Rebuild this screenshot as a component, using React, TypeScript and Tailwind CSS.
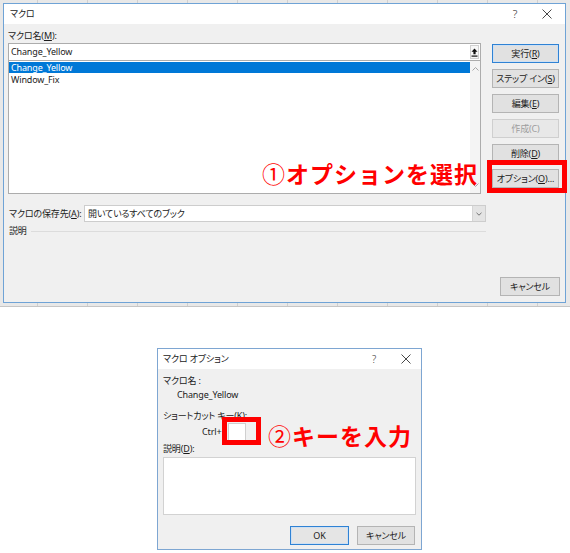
import type { ReactNode } from "react";

const ui = "font-['Noto_Sans','Noto_Sans_CJK_JP',sans-serif] [font-feature-settings:'palt'] text-[9px] tracking-[-0.15px] text-[#1b1b1b]";
const mark = "font-['Noto_Sans_CJK_JP',sans-serif] [font-feature-settings:normal] text-[23px] font-bold leading-none tracking-[1px] text-[#ff0000]";

function Btn({
  children,
  className = "",
  tone = "normal",
}: {
  children: ReactNode;
  className?: string;
  tone?: "normal" | "default" | "disabled";
}) {
  const look =
    tone === "default"
      ? "border-[#2f82d4] bg-[#e1e1e1] text-[#1b1b1b] shadow-[inset_0_0_0_1px_#cfe0f2]"
      : tone === "disabled"
        ? "border-[#cfcfcf] bg-[#e8e8e8] text-[#9d9d9d]"
        : "border-[#b4b4b4] bg-[#e1e1e1] text-[#1b1b1b]";
  return (
    <div className={`flex h-[19px] items-center justify-center border leading-none ${look} ${className}`}>
      {children}
    </div>
  );
}

function Key({ k }: { k: string }) {
  return <span className="underline underline-offset-[1px]">{k}</span>;
}

function Close() {
  return (
    <svg width="10" height="10" viewBox="0 0 10 10" className="block">
      <path d="M0.5 0.5 L9.5 9.5 M9.5 0.5 L0.5 9.5" stroke="#333" strokeWidth="0.9" fill="none" />
    </svg>
  );
}

function Chevron({ up = false }: { up?: boolean }) {
  return (
    <svg width="7" height="4" viewBox="0 0 7 4" className="block">
      <path d={up ? "M0.5 3.5 L3.5 0.5 L6.5 3.5" : "M0.5 0.5 L3.5 3.5 L6.5 0.5"} stroke="#a6a6a6" strokeWidth="1" fill="none" />
    </svg>
  );
}

function MacroDialog() {
  return (
    <div className="flex h-[300px] w-[563px] flex-col border border-[#6fa3d6]">
      <div className="flex h-[20px] items-center bg-white pl-[6px] pr-[8px]">
        <span>マクロ</span>
        <span className="ml-auto w-[20px] text-center text-[11px] font-light text-[#333]">?</span>
        <span className="ml-[12px] flex w-[20px] justify-center">
          <Close />
        </span>
      </div>
      <div className="flex flex-1 flex-col bg-[#f0f0f0] pl-[4px]">
        <div className="flex">
          <div className="w-[478px]">
            <div className="flex h-[19px] items-center pt-[4px]">
              マクロ名(<Key k="M" />):
            </div>
            <div className="flex h-[18px] w-[473px] items-center border border-[#acacac] bg-white">
              <span className="pl-[2px]">Change_Yellow</span>
              <span className="ml-auto mr-[1px] flex h-[14px] w-[9px] items-center justify-center border border-[#d0d0d0] bg-[#f7f7f7]">
                <svg width="7" height="9" viewBox="0 0 7 9" className="block">
                  <path d="M3.5 0.5 L6.5 3.8 L4.6 3.8 L4.6 6.2 L2.4 6.2 L2.4 3.8 L0.5 3.8 Z" fill="#111" />
                  <rect x="0.5" y="7.5" width="6" height="1.2" fill="#111" />
                </svg>
              </span>
            </div>
            <div className="flex h-[133px] w-[473px] border border-t-0 border-[#acacac] bg-white">
              <div className="flex-1 pt-[1px]">
                <div className="flex h-[11px] items-center bg-[#0078d7] pl-[2px] text-white">Change_Yellow</div>
                <div className="flex h-[13px] items-center pl-[2px]">Window_Fix</div>
              </div>
              <div className="flex w-[10px] flex-col items-center justify-between bg-[#f4f4f4] py-[6px]">
                <Chevron up />
                <Chevron />
              </div>
            </div>
            <div className="mt-[11px] flex h-[17px] items-center">
              <span className="w-[76px] pl-[1px]">
                マクロの保存先(<Key k="A" />):
              </span>
              <div className="flex h-[17px] flex-1 items-center border border-[#cdcdcd] bg-white">
                <span className="pl-[3px]">開いているすべてのブック</span>
                <span className="ml-auto flex h-full w-[13px] items-center justify-center border-l border-[#d6d6d6] bg-[#e4e4e4]">
                  <svg width="6" height="4" viewBox="0 0 6 4" className="block">
                    <path d="M0.5 0.8 L3 3.2 L5.5 0.8" stroke="#666" strokeWidth="0.9" fill="none" />
                  </svg>
                </span>
              </div>
            </div>
            <div className="mt-[2px] flex h-[14px] items-center">
              <span className="pl-[1px]">説明</span>
              <span className="ml-[4px] h-px flex-1 bg-[#dcdcdc]" />
            </div>
          </div>
          <div className="ml-[6px] flex w-[67px] flex-col gap-[6px] pt-[20px]">
            <Btn tone="default">
              実行(<Key k="R" />)
            </Btn>
            <Btn>
              ステップ イン(<Key k="S" />)
            </Btn>
            <Btn>
              編集(<Key k="E" />)
            </Btn>
            <Btn tone="disabled">作成(C)</Btn>
            <Btn>
              削除(<Key k="D" />)
            </Btn>
            <Btn>
              オプション(<Key k="O" />)...
            </Btn>
          </div>
        </div>
        <div className="mt-auto flex justify-end pb-[6px] pr-[5px]">
          <Btn className="w-[60px]">キャンセル</Btn>
        </div>
      </div>
    </div>
  );
}

function OptionDialog() {
  return (
    <div className="flex h-[202px] w-[265px] flex-col border border-[#7ea6d2]">
      <div className="flex h-[20px] items-center bg-white pl-[5px] pr-[7px]">
        <span>マクロ オプション</span>
        <span className="ml-auto w-[16px] text-center text-[10px] font-light text-[#333]">?</span>
        <span className="ml-[16px] flex w-[16px] justify-center">
          <Close />
        </span>
      </div>
      <div className="flex flex-1 flex-col bg-[#f0f0f0] px-[5px]">
        <div className="flex h-[19px] items-center pt-[5px]">マクロ名 :</div>
        <div className="flex h-[14px] items-center pl-[14px]">Change_Yellow</div>
        <div className="mt-[7px] flex h-[14px] items-center">
          ショートカット キー(<Key k="K" />):
        </div>
        <div className="flex h-[18px] items-center pl-[39px]">
          <span className="w-[26px]">Ctrl+</span>
          <span className="h-[18px] w-[18px] border border-[#cfcfcf] bg-white" />
        </div>
        <div className="mt-[1px] flex h-[14px] items-center">
          説明(<Key k="D" />):
        </div>
        <div className="mt-[1px] h-[58px] w-[253px] border border-[#d2d2d2] bg-white" />
        <div className="mt-[11px] flex justify-end gap-[8px] pr-[1px]">
          <Btn tone="default" className="w-[59px] bg-[#e5e5e5]">
            OK
          </Btn>
          <Btn className="w-[58px]">キャンセル</Btn>
        </div>
      </div>
    </div>
  );
}

export default function App() {
  return (
    <div className={`relative h-[553px] w-[570px] overflow-hidden bg-white ${ui}`}>
      <div className="h-[307px] border-b border-[#c6c6c6] bg-[#e8e8e8] bg-[linear-gradient(to_right,#d0d0d0_1px,transparent_1px)] bg-[length:50px_100%] bg-[position:37px_0] pl-[3px] pt-[3px]">
        <MacroDialog />
      </div>
      <div className="pl-[157px] pt-[41px]">
        <OptionDialog />
      </div>

      <div className="absolute left-[487px] top-[160px] h-[33px] w-[80px] border-[5px] border-[#ff0000]" />
      <div className={`absolute left-[262px] top-[162px] ${mark}`}>
        <span className="font-normal">①</span>オプションを選択
      </div>

      <div className="absolute left-[222px] top-[417px] h-[28px] w-[39px] border-[5px] border-[#ff0000]" />
      <div className={`absolute left-[268px] top-[424px] ${mark}`}>
        <span className="font-normal">②</span>キーを入力
      </div>
    </div>
  );
}
